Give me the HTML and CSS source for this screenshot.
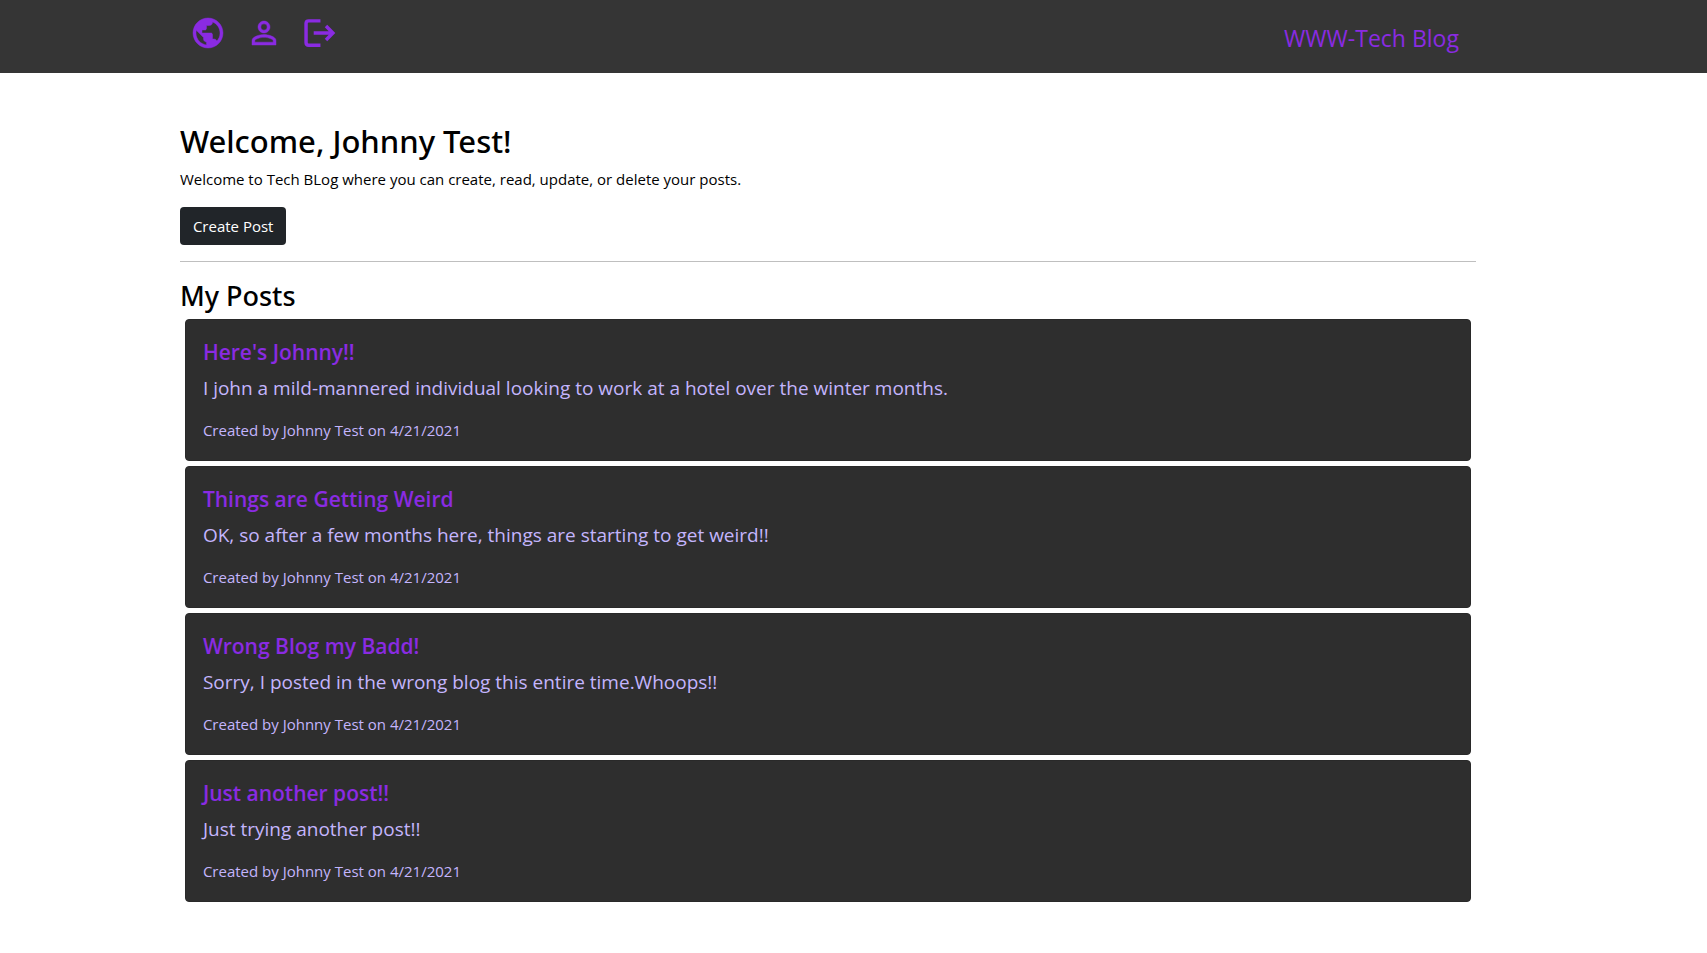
FILE: index.html
```html
<!DOCTYPE html>
<html lang="en">
<head>
<meta charset="utf-8">
<title>WWW-Tech Blog</title>
<link rel="stylesheet" href="styles.css">
</head>
<body>
<header class="site-header">
  <div class="container header-row">
    <nav class="nav-icons" aria-label="Main">
      <a href="#" aria-label="Home"><svg viewBox="0 0 24 24"><path fill="currentColor" stroke="currentColor" stroke-width=".3" d="M12 2C6.480 2 2 6.480 2 12s4.480 10 10 10 10-4.480 10-10S17.520 2 12 2zm-1 17.930c-3.950-.49-7-3.850-7-7.930 0-.62.08-1.210.21-1.790L9 15v1c0 1.100.9 2 2 2v1.930zm6.900-2.540c-.26-.81-1-1.390-1.900-1.390h-1v-3c0-.55-.45-1-1-1H8v-2h2c.55 0 1-.45 1-1V7h2c1.100 0 2-.9 2-2v-.41c2.930 1.190 5 4.060 5 7.410 0 2.080-.8 3.970-2.100 5.390z"/></svg></a>
      <a href="#" aria-label="Dashboard"><svg viewBox="0 0 24 24"><path fill="currentColor" stroke="currentColor" stroke-width=".3" d="M12 5.900a2.100 2.100 0 1 1 0 4.200 2.100 2.100 0 0 1 0-4.200m0 9c2.970 0 6.100 1.460 6.100 2.100v1.100H5.900V17c0-.64 3.130-2.100 6.100-2.100M12 4C9.790 4 8 5.790 8 8s1.790 4 4 4 4-1.790 4-4-1.790-4-4-4zm0 9c-2.670 0-8 1.340-8 4v3h16v-3c0-2.660-5.330-4-8-4z"/></svg></a>
      <a href="#" aria-label="Log out"><svg viewBox="0 0 24 24"><path fill="none" stroke="currentColor" stroke-width="2.300" d="M12.300 3.900H4.500Q2.700 3.900 2.700 5.700V18.300Q2.700 20.100 4.500 20.100H12.300M7.800 12H20.500M16 7.300L20.600 12L16 16.700"/></svg></a>
    </nav>
    <a class="brand" href="#">WWW-Tech Blog</a>
  </div>
</header>
<main class="page">
  <div class="container">
    <h1 class="welcome">Welcome, Johnny Test!</h1>
    <p class="intro">Welcome to Tech BLog where you can create, read, update, or delete your posts.</p>
    <button class="create" type="button">Create Post</button>
    <hr class="rule">
    <h2 class="section-title">My Posts</h2>
    <div class="posts">
      <article class="post">
        <h3 class="post-title"><a href="#">Here's Johnny!!</a></h3>
        <p class="post-body">I john a mild-mannered individual looking to work at a hotel over the winter months.</p>
        <p class="post-meta">Created by Johnny Test on 4/21/2021</p>
      </article>
      <article class="post">
        <h3 class="post-title"><a href="#">Things are Getting Weird</a></h3>
        <p class="post-body">OK, so after a few months here, things are starting to get weird!!</p>
        <p class="post-meta">Created by Johnny Test on 4/21/2021</p>
      </article>
      <article class="post">
        <h3 class="post-title"><a href="#">Wrong Blog my Badd!</a></h3>
        <p class="post-body">Sorry, I posted in the wrong blog this entire time.Whoops!!</p>
        <p class="post-meta">Created by Johnny Test on 4/21/2021</p>
      </article>
      <article class="post">
        <h3 class="post-title"><a href="#">Just another post!!</a></h3>
        <p class="post-body">Just trying another post!!</p>
        <p class="post-meta">Created by Johnny Test on 4/21/2021</p>
      </article>
    </div>
  </div>
</main>
</body>
</html>
```
FILE: styles.css
```css
* { box-sizing: border-box; }
body {
  margin: 0;
  background: #fff;
  color: #000;
  font-family: "Open Sans", "Noto Sans", sans-serif;
  font-size: 15px;
  line-height: 24px;
}
h1, h2, h3, p { margin: 0; }
a { color: blueviolet; text-decoration: none; }
.site-header, .page { padding-right: 3%; }
.site-header { background: #353535; }
.container { max-width: 1296px; margin: 0 auto; }
.header-row {
  display: flex;
  justify-content: space-between;
  align-items: flex-start;
  padding: 15px 17px 15px 10px;
}
.nav-icons { display: flex; gap: 20px; }
.nav-icons a, .nav-icons svg { display: block; width: 36px; height: 36px; }
.brand { font-size: 23px; line-height: 32px; padding-top: 7px; height: 43px; }
.page { padding-top: 48px; padding-bottom: 48px; }
.welcome, .section-title { font-family: "Noto Sans", "Open Sans", sans-serif; font-weight: 500; }
.welcome { font-size: 31px; line-height: 40px; margin-bottom: 6px; }
.intro { margin-bottom: 16px; }
.create {
  display: block;
  height: 38px;
  padding: 0 13px;
  border: 0;
  border-radius: 4px;
  background: #212529;
  color: #fff;
  font: inherit;
}
.rule { height: 1px; margin: 16px 0; border: 0; background: #bfbfbf; }
.section-title { font-size: 27px; line-height: 36px; margin-bottom: 5px; }
.posts { display: grid; gap: 5px; padding: 0 5px; }
.post {
  padding: 17px 17px 18px;
  border: 1px solid #292929;
  border-radius: 4px;
  background: #2e2e2e;
  color: #c4b5fd;
}
.post-title { font-size: 21px; line-height: 30px; font-weight: 600; margin-bottom: 5px; }
.post-body { font-size: 19px; line-height: 32px; margin-bottom: 14px; }
```
